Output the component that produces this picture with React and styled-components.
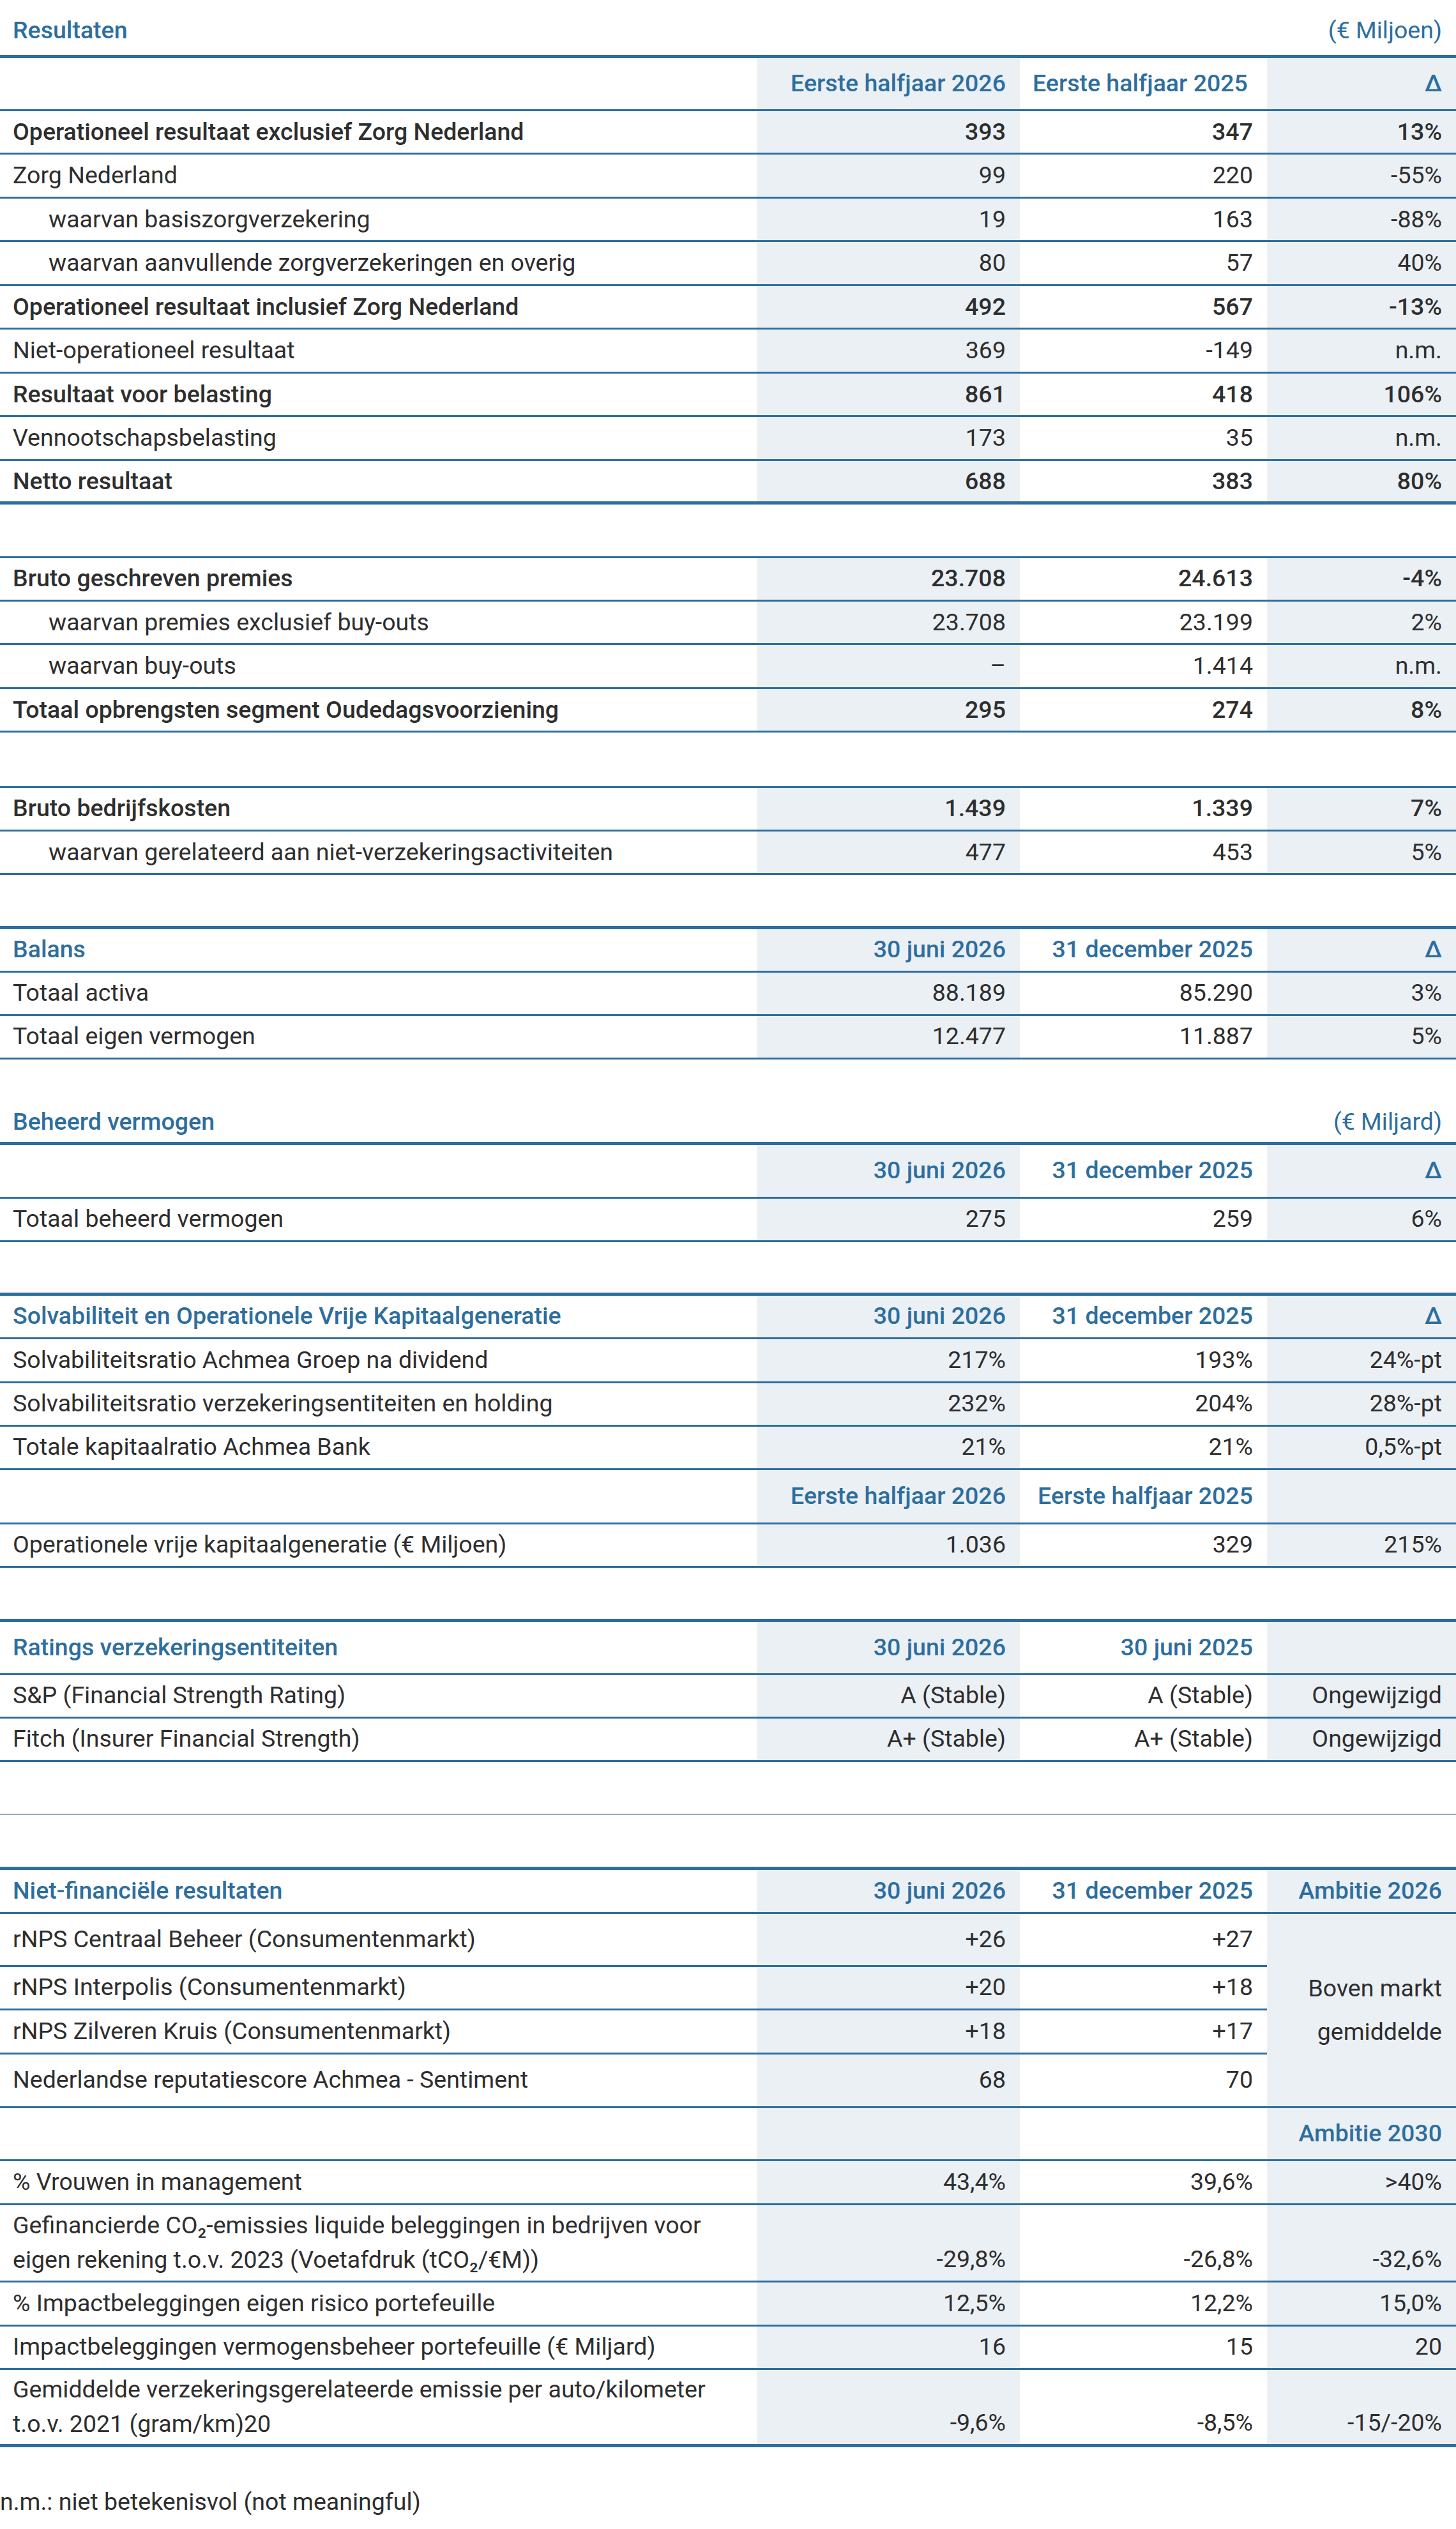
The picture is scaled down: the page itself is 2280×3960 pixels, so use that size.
import React from "react";
import styled, { createGlobalStyle } from "styled-components";

const BLUE = "#2d6e9e";
const INK = "#2e2e2e";
const SHADE = "#ebf0f5";
const WIDTHS = [1185, 412, 387, 296];

const GlobalStyle = createGlobalStyle`
  html,
  body {
    margin: 0;
    padding: 0;
    background: #fff;
  }

  body {
    font-family: Roboto, "Liberation Sans", Arial, sans-serif;
    color: ${INK};
  }
`;

const Page = styled.div`
  width: 2280px;
  font-size: 37.5px;
`;

const TitleBar = styled.div`
  display: flex;
  justify-content: space-between;
  align-items: flex-end;
  box-sizing: border-box;
  height: ${(p) => p.$height}px;
  padding: 0 22px ${(p) => p.$pb}px 20px;
  line-height: 44px;
  color: ${BLUE};
`;

const Title = styled.span`
  font-weight: 500;
`;

const Unit = styled.span`
  font-weight: 400;
`;

const Table = styled.table`
  width: 100%;
  table-layout: fixed;
  border-collapse: separate;
  border-spacing: 0;
  margin-top: ${(p) => p.$mt || 0}px;
  font-size: 37.5px;
  line-height: 53.5px;
`;

const Col = styled.col`
  width: ${(p) => p.$w}px;
`;

const Row = styled.tr`
  height: ${(p) => p.$h}px;

  > td {
    border-top: ${(p) => (p.$top ? `${p.$top}px solid ${BLUE}` : "0")};
    border-bottom-width: ${(p) => p.$last || 3}px;
  }
`;

const Cell = styled.td`
  box-sizing: border-box;
  padding: 3px 22px ${(p) => (p.$valign === "bottom" ? 6 : 3)}px
    ${(p) => (p.$indent ? 76 : 20)}px;
  text-align: ${(p) => p.$align || "right"};
  vertical-align: ${(p) => p.$valign || "middle"};
  background: ${(p) => (p.$shade ? SHADE : "transparent")};
  border-bottom: 3px solid ${BLUE};
  color: ${(p) => (p.$head ? BLUE : INK)};
  font-weight: ${(p) => (p.$head || p.$strong ? 500 : 400)};
  white-space: nowrap;
`;

const SpanCell = styled(Cell)`
  line-height: 68px;
`;

const Rule = styled.div`
  margin-top: ${(p) => p.$mt}px;
  height: 2px;
  background: #8badc9;
`;

const Footnote = styled.p`
  margin: ${(p) => p.$mt}px 0 0;
  line-height: 44px;
  font-size: 37.5px;
`;

const Lines = ({ lines }) =>
  lines.map((l, i) => (
    <React.Fragment key={i}>
      {i > 0 && <br />}
      {l}
    </React.Fragment>
  ));

const DataTable = ({ mt, top, last, rows }) => (
  <Table $mt={mt}>
    <colgroup>
      {WIDTHS.map((w) => (
        <Col key={w} $w={w} />
      ))}
    </colgroup>
    <tbody>
      {rows.map((r, i) => (
        <Row
          key={i}
          $h={r.h}
          $top={i === 0 ? top : 0}
          $last={i === rows.length - 1 ? last : 0}
        >
          <Cell
            $align="left"
            $head={r.head}
            $strong={r.strong}
            $indent={r.indent}
          >
            {Array.isArray(r.label) ? <Lines lines={r.label} /> : r.label}
          </Cell>
          {r.values.map((v, j) => {
            if (v === null) return null;
            if (typeof v === "object") {
              return (
                <SpanCell key={j} rowSpan={v.span} $shade={j !== 1}>
                  <Lines lines={v.lines} />
                </SpanCell>
              );
            }
            return (
              <Cell
                key={j}
                $shade={j !== 1}
                $head={r.head}
                $strong={r.strong}
                $valign={r.valign}
                $align={r.alignB && j === 1 ? "left" : "right"}
              >
                {v}
              </Cell>
            );
          })}
        </Row>
      ))}
    </tbody>
  </Table>
);

const R = 68.5;

const results = [
  { h: 87.5, head: true, alignB: true, label: "", values: ["Eerste halfjaar 2026", "Eerste halfjaar 2025", "Δ"] },
  { h: R, strong: true, label: "Operationeel resultaat exclusief Zorg Nederland", values: ["393", "347", "13%"] },
  { h: R, label: "Zorg Nederland", values: ["99", "220", "-55%"] },
  { h: R, indent: true, label: "waarvan basiszorgverzekering", values: ["19", "163", "-88%"] },
  { h: R, indent: true, label: "waarvan aanvullende zorgverzekeringen en overig", values: ["80", "57", "40%"] },
  { h: R, strong: true, label: "Operationeel resultaat inclusief Zorg Nederland", values: ["492", "567", "-13%"] },
  { h: R, label: "Niet-operationeel resultaat", values: ["369", "-149", "n.m."] },
  { h: R, strong: true, label: "Resultaat voor belasting", values: ["861", "418", "106%"] },
  { h: R, label: "Vennootschapsbelasting", values: ["173", "35", "n.m."] },
  { h: R, strong: true, label: "Netto resultaat", values: ["688", "383", "80%"] },
];

const premies = [
  { h: 71, strong: true, label: "Bruto geschreven premies", values: ["23.708", "24.613", "-4%"] },
  { h: R, indent: true, label: "waarvan premies exclusief buy-outs", values: ["23.708", "23.199", "2%"] },
  { h: R, indent: true, label: "waarvan buy-outs", values: ["–", "1.414", "n.m."] },
  { h: R, strong: true, label: "Totaal opbrengsten segment Oudedagsvoorziening", values: ["295", "274", "8%"] },
];

const kosten = [
  { h: 71, strong: true, label: "Bruto bedrijfskosten", values: ["1.439", "1.339", "7%"] },
  { h: R, indent: true, label: "waarvan gerelateerd aan niet-verzekeringsactiviteiten", values: ["477", "453", "5%"] },
];

const balans = [
  { h: 73, head: true, label: "Balans", values: ["30 juni 2026", "31 december 2025", "Δ"] },
  { h: 68, label: "Totaal activa", values: ["88.189", "85.290", "3%"] },
  { h: 68, label: "Totaal eigen vermogen", values: ["12.477", "11.887", "5%"] },
];

const beheerd = [
  { h: 89, head: true, label: "", values: ["30 juni 2026", "31 december 2025", "Δ"] },
  { h: 68, label: "Totaal beheerd vermogen", values: ["275", "259", "6%"] },
];

const solvency = [
  { h: 73, head: true, label: "Solvabiliteit en Operationele Vrije Kapitaalgeneratie", values: ["30 juni 2026", "31 december 2025", "Δ"] },
  { h: 69, label: "Solvabiliteitsratio Achmea Groep na dividend", values: ["217%", "193%", "24%-pt"] },
  { h: 68, label: "Solvabiliteitsratio verzekeringsentiteiten en holding", values: ["232%", "204%", "28%-pt"] },
  { h: 68, label: "Totale kapitaalratio Achmea Bank", values: ["21%", "21%", "0,5%-pt"] },
  { h: 85, head: true, label: "", values: ["Eerste halfjaar 2026", "Eerste halfjaar 2025", ""] },
  { h: 68, label: "Operationele vrije kapitaalgeneratie (€ Miljoen)", values: ["1.036", "329", "215%"] },
];

const ratings = [
  { h: 88, head: true, label: "Ratings verzekeringsentiteiten", values: ["30 juni 2026", "30 juni 2025", ""] },
  { h: 68, label: "S&P (Financial Strength Rating)", values: ["A (Stable)", "A (Stable)", "Ongewijzigd"] },
  { h: 68, label: "Fitch (Insurer Financial Strength)", values: ["A+ (Stable)", "A+ (Stable)", "Ongewijzigd"] },
];

const nonFinancial = [
  { h: 74, head: true, label: "Niet-financiële resultaten", values: ["30 juni 2026", "31 december 2025", "Ambitie 2026"] },
  { h: 83, label: "rNPS Centraal Beheer (Consumentenmarkt)", values: ["+26", "+27", { span: 4, lines: ["Boven markt", "gemiddelde"] }] },
  { h: 68, label: "rNPS Interpolis (Consumentenmarkt)", values: ["+20", "+18", null] },
  { h: 69, label: "rNPS Zilveren Kruis (Consumentenmarkt)", values: ["+18", "+17", null] },
  { h: 84, label: "Nederlandse reputatiescore Achmea - Sentiment", values: ["68", "70", null] },
  { h: 83, head: true, label: "", values: ["", "", "Ambitie 2030"] },
  { h: 69, label: "% Vrouwen in management", values: ["43,4%", "39,6%", ">40%"] },
  {
    h: 121,
    valign: "bottom",
    label: [
      "Gefinancierde CO₂-emissies liquide beleggingen in bedrijven voor",
      "eigen rekening t.o.v. 2023 (Voetafdruk (tCO₂/€M))",
    ],
    values: ["-29,8%", "-26,8%", "-32,6%"],
  },
  { h: 69, label: "% Impactbeleggingen eigen risico portefeuille", values: ["12,5%", "12,2%", "15,0%"] },
  { h: 68, label: "Impactbeleggingen vermogensbeheer portefeuille (€ Miljard)", values: ["16", "15", "20"] },
  {
    h: 121,
    valign: "bottom",
    label: [
      "Gemiddelde verzekeringsgerelateerde emissie per auto/kilometer",
      "t.o.v. 2021 (gram/km)20",
    ],
    values: ["-9,6%", "-8,5%", "-15/-20%"],
  },
];

const App = () => (
  <Page>
    <GlobalStyle />
    <TitleBar $height={86} $pb={16.8}>
      <Title>Resultaten</Title>
      <Unit>(€ Miljoen)</Unit>
    </TitleBar>
    <DataTable top={5} last={5} rows={results} />
    <DataTable mt={80.5} top={3} rows={premies} />
    <DataTable mt={83.5} top={3} rows={kosten} />
    <DataTable mt={79.5} top={5} rows={balans} />
    <TitleBar $height={129} $pb={9.3}>
      <Title>Beheerd vermogen</Title>
      <Unit>(€ Miljard)</Unit>
    </TitleBar>
    <DataTable top={5} rows={beheerd} />
    <DataTable mt={79} top={5} rows={solvency} />
    <DataTable mt={80} top={5} rows={ratings} />
    <Rule $mt={81.5} />
    <DataTable mt={80.5} top={5} last={5} rows={nonFinancial} />
    <Footnote $mt={63.5}>n.m.: niet betekenisvol (not meaningful)</Footnote>
  </Page>
);

export default App;
